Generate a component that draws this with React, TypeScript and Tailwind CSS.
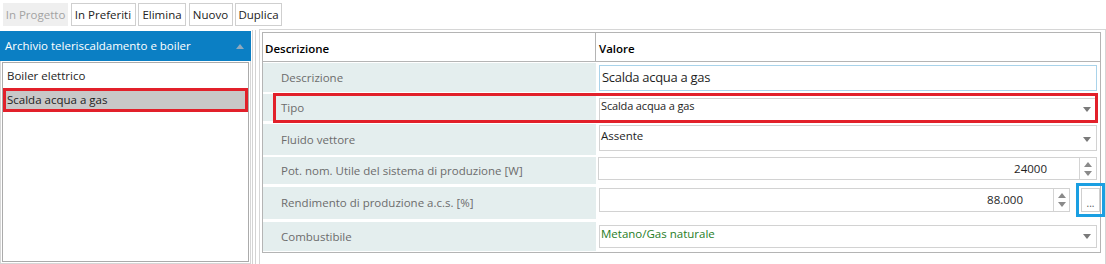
import React from "react";

const FONT = { fontFamily: '"Open Sans", "Noto Sans", sans-serif' };

function ToolButton({ label, width, disabled }: { label: string; width: number; disabled?: boolean }) {
  return (
    <div
      className={
        disabled
          ? "h-[23px] flex items-center justify-center bg-[#efefef] text-[#a3a3a3] text-[11.5px]"
          : "h-[23px] flex items-center justify-center bg-white border border-[#cfcfcf] text-[#222] text-[11.5px]"
      }
      style={{ width }}
    >
      {label}
    </div>
  );
}

function DropArrow() {
  return (
    <svg width="8" height="5" viewBox="0 0 8 5" className="shrink-0">
      <path d="M0 0 H8 L4 5 Z" fill="#7a7a7a" />
    </svg>
  );
}

function Spinner({ width }: { width: number }) {
  return (
    <div className="h-full border-l border-[#d4d4d4] flex flex-col items-center justify-center gap-[4px]" style={{ width }}>
      <svg width="8" height="5" viewBox="0 0 8 5">
        <path d="M0 5 H8 L4 0 Z" fill="#8a8a8a" />
      </svg>
      <svg width="8" height="5" viewBox="0 0 8 5">
        <path d="M0 0 H8 L4 5 Z" fill="#8a8a8a" />
      </svg>
    </div>
  );
}

export default function App() {
  const rows = [
    { label: "Descrizione", mt: 1, h: 29 },
    { label: "Tipo", mt: 2, h: 27 },
    { label: "Fluido vettore", mt: 3, h: 31 },
    { label: "Pot. nom. Utile del sistema di produzione [W]", mt: 2, h: 27 },
    { label: "Rendimento di produzione a.c.s. [%]", mt: 3, h: 32 },
    { label: "Combustibile", mt: 3, h: 29 },
  ];

  const renderValue = (i: number) => {
    switch (i) {
      case 0:
        return (
          <div className="mt-[2px] ml-[2px] w-[498px] h-[26px] border border-[#a9d3ea] flex items-center pl-[2px] text-[13px] tracking-[-0.3px] text-[#1e1e1e]">
            Scalda acqua a gas
          </div>
        );
      case 1:
        return (
          <div className="mt-[4px] ml-[2px] w-[498px] h-[23px] border border-[#d2d2d2] flex items-start justify-between pl-[1px] pr-[5px] text-[11px] tracking-[-0.15px] leading-[14px] text-[#1e1e1e]">
            <span>Scalda acqua a gas</span>
            <span className="self-center">
              <DropArrow />
            </span>
          </div>
        );
      case 2:
        return (
          <div className="mt-[1px] ml-[2px] w-[498px] h-[26px] border border-[#d2d2d2] flex items-start justify-between pl-[1px] pr-[5px] text-[11.5px] leading-[14px] text-[#1e1e1e]">
            <span className="pt-[3px]">Assente</span>
            <span className="self-center pt-[3px]">
              <DropArrow />
            </span>
          </div>
        );
      case 3:
        return (
          <div className="ml-[1px] w-[499px] h-[23px] border border-[#d2d2d2] flex items-center text-[11.5px] text-[#1e1e1e]">
            <span className="flex-1 text-right pr-[32px]">24000</span>
            <Spinner width={17} />
          </div>
        );
      case 4:
        return (
          <div className="mt-[1px] ml-[2px] flex items-start">
            <div className="w-[471px] h-[24px] border border-[#d2d2d2] flex items-center text-[11.5px] text-[#1e1e1e]">
              <span className="flex-1 text-right pr-[30px]">88.000</span>
              <Spinner width={16} />
            </div>
            <div className="relative ml-[11px]">
              <div className="w-[19px] h-[24px] border border-[#cfcfcf] bg-white flex items-end justify-center pb-[3px] text-[10px] leading-[10px] text-[#555]">
                ...
              </div>
              <div className="absolute left-[-5px] top-[-5px] w-[29px] h-[34px] border-[3px] border-[#1a9fe2]" />
            </div>
          </div>
        );
      default:
        return (
          <div className="mt-[3px] ml-[2px] w-[498px] h-[23px] border border-[#d2d2d2] flex items-start justify-between pl-[1px] pr-[5px] text-[11.5px] leading-[14px] text-[#1f7d1f]">
            <span className="pt-[1px]">Metano/Gas naturale</span>
            <span className="self-center">
              <DropArrow />
            </span>
          </div>
        );
    }
  };

  return (
    <div className="w-[1106px] h-[264px] bg-white overflow-hidden" style={FONT}>
      {/* Toolbar */}
      <div className="h-[29px] flex items-start gap-[2.5px] pl-[3px] pt-[3px]">
        <ToolButton label="In Progetto" width={65} disabled />
        <ToolButton label="In Preferiti" width={65} />
        <ToolButton label="Elimina" width={48} />
        <ToolButton label="Nuovo" width={44} />
        <ToolButton label="Duplica" width={47} />
      </div>

      <div className="flex h-[235px]">
        {/* Left panel */}
        <div className="w-[251px] pt-[2px] flex flex-col">
          <div className="h-[30px] bg-[#0b7fc4] flex items-center justify-between pl-[5px] pr-[7px] text-white text-[11.5px]">
            <span>Archivio teleriscaldamento e boiler</span>
            <svg width="8" height="5" viewBox="0 0 8 5">
              <path d="M0 5 H8 L4 0 Z" fill="#8fa9bd" />
            </svg>
          </div>
          <div className="flex-1 border border-t-0 border-[#d6d6d6] pt-[1px] px-[1px] pb-[1px] flex">
            <div className="flex-1 border border-[#ababab] flex flex-col text-[11.5px] text-[#1e1e1e]">
              <div className="h-[25px] flex items-center pl-[4px]">Boiler elettrico</div>
              <div className="h-[24px] flex items-center pl-[1px] bg-[#c8c8c8] border-[3px] border-[#e2202a]">
                Scalda acqua a gas
              </div>
            </div>
          </div>
        </div>

        {/* Splitter */}
        <div className="w-[8px] flex pt-[1px]">
          <div className="ml-[1px] border-l border-[#d3d3d3]" />
          <div className="ml-[2px] border-l border-[#d3d3d3]" />
        </div>

        {/* Right panel */}
        <div className="w-[847px] border-l border-t border-r border-[#d6d6d6] pl-[2px] pt-[2px]">
          <div className="w-[839px] border border-[#b4b4b4] pb-[1px]">
            <div className="h-[29px] flex border-b border-[#b4b4b4] text-[11.5px] font-semibold text-black">
              <div className="w-[333px] border-r border-[#b4b4b4] flex items-center pl-[2px] pt-[3px]">Descrizione</div>
              <div className="flex-1 flex items-center pl-[3px] pt-[3px]">Valore</div>
            </div>
            {rows.map((r, i) => (
              <div key={r.label} className="relative flex" style={{ marginTop: r.mt, height: r.h }}>
                <div className="w-[333px] bg-[#e4eeee] flex items-center pl-[18px] text-[11.5px] text-[#6c6c6c]">
                  {r.label}
                </div>
                <div className="flex-1 ml-[1px]">{renderValue(i)}</div>
                {i === 1 && (
                  <div className="absolute left-[10px] top-[-1px] w-[825px] h-[30px] border-[3px] border-[#e2202a] pointer-events-none" />
                )}
              </div>
            ))}
          </div>
        </div>
      </div>
    </div>
  );
}
